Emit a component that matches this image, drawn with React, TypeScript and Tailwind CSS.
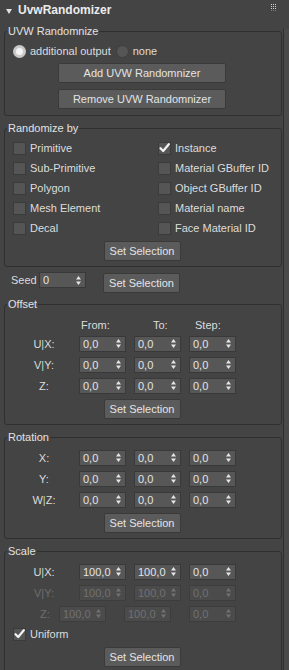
import React from "react";

const Arrows = ({ dis }: { dis?: boolean }) => (
  <svg width="5" height="9" viewBox="0 0 5 9" className="shrink-0">
    <polygon points="2.5,0 5,3.5 0,3.5" fill={dis ? "#727272" : "#e6e6e6"} />
    <polygon points="0,5.5 5,5.5 2.5,9" fill={dis ? "#727272" : "#e6e6e6"} />
  </svg>
);

const Spin = ({ v, dis }: { v: string; dis?: boolean }) =>
  dis ? (
    <div className="flex items-center justify-between h-[16px] w-[47px] pl-[3px] pr-[4px] bg-[#4b4b4b] border border-[#3d3d3d] text-[#717171] shrink-0">
      <span>{v}</span>
      <Arrows dis />
    </div>
  ) : (
    <div className="flex items-center justify-between h-[16px] w-[47px] pl-[3px] pr-[4px] bg-[#575757] border border-[#393939] text-[#e4e4e4] shrink-0">
      <span>{v}</span>
      <Arrows />
    </div>
  );

const Btn = ({ children, w }: { children: React.ReactNode; w: string }) => (
  <div
    className={
      "h-[20px] flex items-center justify-center bg-[#5b5b5b] border border-[#3a3a3a] rounded-[2px] text-[#e4e4e4] shrink-0 " +
      w
    }
  >
    {children}
  </div>
);

const SetSel = () => (
  <div className="flex justify-center mt-[3px]">
    <div className="h-[20px] w-[77px] flex items-center justify-center bg-[#5b5b5b] border border-[#3a3a3a] rounded-[2px] text-[#e4e4e4] -ml-[2px]">
      Set Selection
    </div>
  </div>
);

const Check = ({ on }: { on?: boolean }) => (
  <span className="w-[13px] h-[13px] bg-[#555555] border border-[#3b3b3b] flex items-center justify-center shrink-0">
    {on && (
      <svg width="11" height="10" viewBox="0 0 11 10">
        <path d="M1.5 5.2 L4.2 8 L9.8 1.2" stroke="#f2f2f2" strokeWidth="2.2" fill="none" strokeLinecap="round" strokeLinejoin="round" />
      </svg>
    )}
  </span>
);

const CheckItem = ({ label, on }: { label: string; on?: boolean }) => (
  <div className="h-[20px] flex items-center gap-[4px]">
    <Check on={on} />
    <span>{label}</span>
  </div>
);

const Group = ({ title, children, className }: { title: string; children: React.ReactNode; className: string }) => (
  <fieldset className={"border border-[#2f2f2f] rounded-[3px] " + className}>
    <legend className="ml-[2px] px-[1px] text-[11px] leading-[14px] text-[#e2e2e2]">{title}</legend>
    {children}
  </fieldset>
);

const Label = ({ a, b }: { a?: string; b: string }) => (
  <span className="w-[40px] ml-[19px] text-center shrink-0">
    {a && (
      <>
        {a}
        <span className="text-[#b8dccb]">|</span>
      </>
    )}
    {b}:
  </span>
);

const DisLabel = ({ a, b }: { a?: string; b: string }) => (
  <span className="w-[40px] ml-[19px] text-center shrink-0 text-[#6e6e6e]">
    {a && (
      <>
        {a}|
      </>
    )}
    {b}:
  </span>
);

const SpinRow = ({ a, b, vals }: { a?: string; b: string; vals: string[] }) => (
  <div className="h-[21px] flex items-center">
    <Label a={a} b={b} />
    <div className="ml-[15px] flex gap-[8px]">
      {vals.map((v, i) => (
        <Spin key={i} v={v} />
      ))}
    </div>
  </div>
);

export default function App() {
  return (
    <div className="w-[289px] h-[670px] overflow-hidden bg-[#444444] text-[#dcdcdc] text-[11px] leading-[14px] font-['Liberation_Sans',Arial,sans-serif] flex">
      <div className="w-[283px] shrink-0 pl-[4px] pr-[1px]">
        {/* header */}
        <div className="h-[24px] -ml-[4px] flex items-center relative">
          <svg width="6" height="5" viewBox="0 0 6 5" className="ml-[6px] -mt-[2px]">
            <polygon points="0,0 6,0 3,5" fill="#e0e0e0" />
          </svg>
          <span className="ml-[6px] -mt-[4px] text-[12px] font-bold text-[#ececec]">UvwRandomizer</span>
          <svg width="6" height="7" viewBox="0 0 6 7" className="ml-auto mr-[5px] -mt-[10px]">
            {[0, 2, 4].map((x) =>
              [0, 2, 4, 6].map((y) => <rect key={x + "-" + y} x={x} y={y} width="1" height="1" fill={y === 6 ? "#7a7a7a" : "#cfcfcf"} />)
            )}
          </svg>
        </div>

        {/* UVW Randomnize */}
        <Group title="UVW Randomnize" className="pb-[6px]">
          <div className="h-[20px] mt-[3px] flex items-center ml-[8px]">
            <span className="w-[13px] h-[13px] rounded-full bg-[#c9c9c9] flex items-center justify-center shrink-0">
              <span className="w-[7px] h-[7px] rounded-full bg-[#f4f4f4]" />
            </span>
            <span className="ml-[4px]">additional output</span>
            <span className="ml-[5px] w-[13px] h-[13px] rounded-full bg-[#555555] border border-[#3e3e3e] shrink-0" />
            <span className="ml-[4px]">none</span>
          </div>
          <div className="flex justify-center mt-[2px]">
            <div className="-ml-[2px]">
              <Btn w="w-[168px]">Add UVW Randomnizer</Btn>
            </div>
          </div>
          <div className="flex justify-center mt-[6px]">
            <div className="-ml-[2px]">
              <Btn w="w-[168px]">Remove UVW Randomnizer</Btn>
            </div>
          </div>
        </Group>

        {/* Randomize by */}
        <Group title="Randomize by" className="mt-[5px] pb-[5px]">
          <div className="grid grid-cols-[145px_1fr] pl-[8px] mt-[3px]">
            <CheckItem label="Primitive" />
            <CheckItem label="Instance" on />
            <CheckItem label="Sub-Primitive" />
            <CheckItem label="Material GBuffer ID" />
            <CheckItem label="Polygon" />
            <CheckItem label="Object GBuffer ID" />
            <CheckItem label="Mesh Element" />
            <CheckItem label="Material name" />
            <CheckItem label="Decal" />
            <CheckItem label="Face Material ID" />
          </div>
          <SetSel />
        </Group>

        {/* Seed */}
        <div className="flex items-start mt-[5px] h-[21px]">
          <span className="ml-[7px] w-[28px] leading-[16px]">Seed</span>
          <div className="flex items-center justify-between h-[16px] w-[47px] pl-[3px] pr-[4px] bg-[#575757] border border-[#393939] text-[#e4e4e4]">
            <span>0</span>
            <Arrows />
          </div>
          <div className="ml-[17px] mt-[1px]">
            <Btn w="w-[77px]">Set Selection</Btn>
          </div>
        </div>

        {/* Offset */}
        <Group title="Offset" className="mt-[4px] pb-[5px]">
          <div className="h-[16px] mt-[6px] flex items-center">
            <span className="ml-[76px] w-[72px]">From:</span>
            <span className="w-[42px]">To:</span>
            <span>Step:</span>
          </div>
          <SpinRow a="U" b="X" vals={["0,0", "0,0", "0,0"]} />
          <SpinRow a="V" b="Y" vals={["0,0", "0,0", "0,0"]} />
          <SpinRow b="Z" vals={["0,0", "0,0", "0,0"]} />
          <SetSel />
        </Group>

        {/* Rotation */}
        <Group title="Rotation" className="mt-[5px] pb-[5px]">
          <div className="mt-[3px]">
            <SpinRow b="X" vals={["0,0", "0,0", "0,0"]} />
            <SpinRow b="Y" vals={["0,0", "0,0", "0,0"]} />
            <SpinRow a="W" b="Z" vals={["0,0", "0,0", "0,0"]} />
          </div>
          <SetSel />
        </Group>

        {/* Scale */}
        <Group title="Scale" className="mt-[5px] pb-[5px]">
          <div className="mt-[3px]">
            <SpinRow a="U" b="X" vals={["100,0", "100,0", "0,0"]} />
            <div className="h-[21px] flex items-center">
              <DisLabel a="V" b="Y" />
              <div className="ml-[15px] flex gap-[8px]">
                <Spin v="100,0" dis />
                <Spin v="100,0" dis />
                <Spin v="0,0" dis />
              </div>
            </div>
            <div className="h-[21px] flex items-center">
              <span className="ml-[35px] w-[19px] shrink-0 text-[#6e6e6e]">Z:</span>
              <div className="flex gap-[18px]">
                <Spin v="100,0" dis />
                <Spin v="100,0" dis />
                <Spin v="0,0" dis />
              </div>
            </div>
            <div className="h-[20px] flex items-center gap-[4px] ml-[8px]">
              <Check on />
              <span>Uniform</span>
            </div>
          </div>
          <SetSel />
        </Group>
      </div>
      <div className="w-[1px] mt-[29px] bg-[#2f2f2f] shrink-0" />
      <div className="flex-1 mt-[29px] bg-[#4a4a4a]" />
    </div>
  );
}
